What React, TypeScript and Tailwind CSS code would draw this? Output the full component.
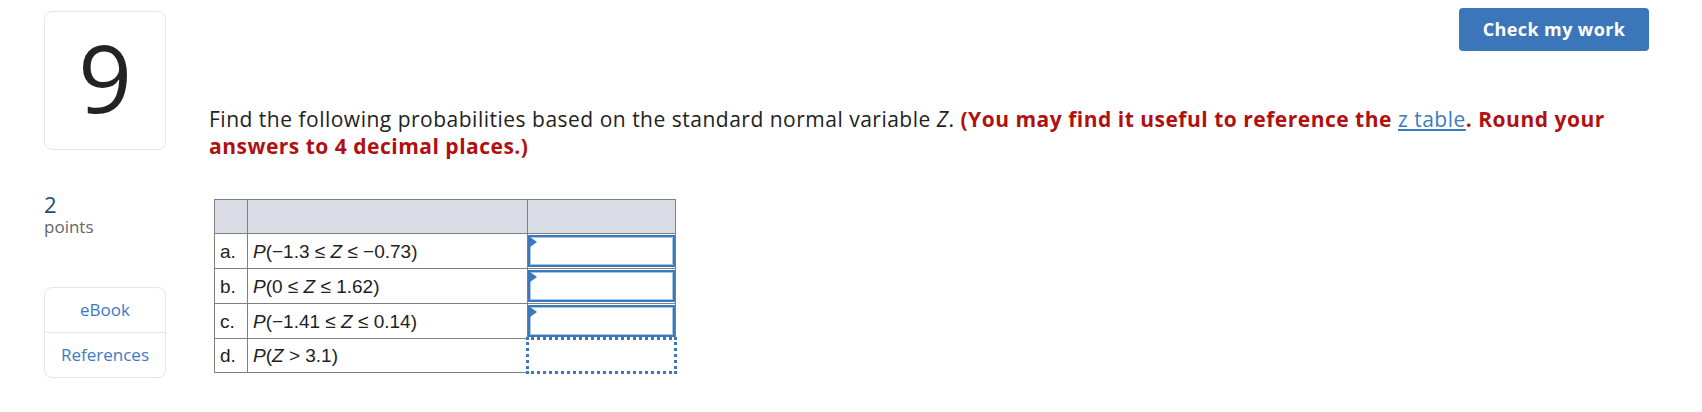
import React from "react"

type Row = {
  label: string
  expr: React.ReactNode
  height: string
  focused?: boolean
}

const Z = () => <i>Z</i>
const P = () => <i>P</i>

const rows: Row[] = [
  {
    label: "a.",
    expr: (
      <>
        <P />(−1.3 ≤ <Z /> ≤ −0.73)
      </>
    ),
    height: "h-[35px]",
  },
  {
    label: "b.",
    expr: (
      <>
        <P />(0 ≤ <Z /> ≤ 1.62)
      </>
    ),
    height: "h-[35px]",
  },
  {
    label: "c.",
    expr: (
      <>
        <P />(−1.41 ≤ <Z /> ≤ 0.14)
      </>
    ),
    height: "h-[34px]",
  },
  {
    label: "d.",
    expr: (
      <>
        <P />(<Z /> &gt; 3.1)
      </>
    ),
    height: "h-[34px]",
    focused: true,
  },
]

const AnswerBox = () => (
  <div className="relative h-[32px] border-2 border-[#3a77bb] shadow-[inset_0_0_0_1px_#a9c4e4] bg-white">
    <span className="absolute left-0 top-0 h-0 w-0 border-y-[5px] border-l-[7px] border-y-transparent border-l-[#3a77bb]" />
  </div>
)

const ProbTable = () => (
  <table className="border-collapse text-[19px] text-[#222] [font-family:'Liberation_Sans',Arial,sans-serif]">
    <thead>
      <tr className="h-[34px] bg-[#d9dce5]">
        <th className="w-[33px] border border-[#808080]" />
        <th className="w-[280px] border border-[#808080]" />
        <th className="w-[148px] border border-[#808080]" />
      </tr>
    </thead>
    <tbody>
      {rows.map((r) => (
        <tr key={r.label} className={r.height}>
          <td className="border border-[#808080] pl-[5px] leading-none">
            {r.label}
          </td>
          <td className="border border-[#808080] pl-[5px] leading-none">
            {r.expr}
          </td>
          {r.focused ? (
            <td className="border-[3px] border-dotted border-[#3a77bb] p-0" />
          ) : (
            <td className="border border-[#808080] p-0 align-top pt-px">
              <AnswerBox />
            </td>
          )}
        </tr>
      ))}
    </tbody>
  </table>
)

const Sidebar = () => (
  <div className="ml-[44px] mt-[11px] flex w-[122px] shrink-0 flex-col">
    <div className="flex h-[139px] items-center justify-center rounded-[8px] border border-[#e6e6e6] pb-[8px]">
      <span className="text-[94px] leading-none text-[#232323]">9</span>
    </div>
    <div className="mt-[42px] text-[22px] leading-[24px] text-[#1d4c87]">2</div>
    <div className="text-[17px] leading-[22px] text-[#666]">points</div>
    <div className="mt-[49px] flex flex-col rounded-[8px] border border-[#e6e6e6] text-[17px] text-[#3b7bbf]">
      <div className="flex h-[45px] items-center justify-center border-b border-[#e6e6e6]">
        eBook
      </div>
      <div className="flex h-[44px] items-center justify-center">References</div>
    </div>
  </div>
)

export default function App() {
  return (
    <div className="flex h-[412px] w-[1702px] bg-white [font-family:'Open_Sans',Lato,sans-serif]">
      <Sidebar />
      <div className="ml-[43px] flex flex-1 flex-col">
        <div className="mt-[8px] mr-[53px] flex justify-end">
          <button className="h-[43px] w-[190px] rounded-[4px] bg-[#3a76b9] text-[18px] font-bold tracking-[0.4px] text-white">
            Check my work
          </button>
        </div>
        <p className="mt-[55px] mr-[55px] text-[21px] leading-[27px] tracking-[0.5px] text-[#222]">
          Find the following probabilities based on the standard normal variable{" "}
          <i>Z</i>.{" "}
          <b className="text-[#b0100f]">
            (You may find it useful to reference the{" "}
            <a className="font-normal text-[#3b7bbf] underline">z table</a>. Round
            your answers to 4 decimal places.)
          </b>
        </p>
        <div className="mt-[39px] ml-[5px]">
          <ProbTable />
        </div>
      </div>
    </div>
  )
}
